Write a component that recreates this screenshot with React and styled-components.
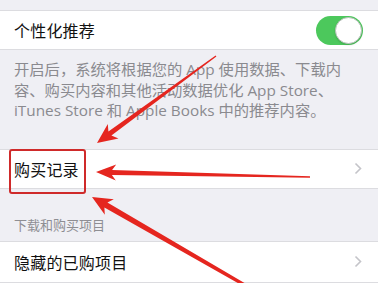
import React from "react";
import styled, { createGlobalStyle } from "styled-components";

const Global = createGlobalStyle`
  html, body { margin: 0; padding: 0; background: #efeff4; }
  body { font-family: "Noto Sans CJK SC", "Noto Sans", sans-serif; }
`;

const Page = styled.div`
  position: relative;
  width: 378px;
  height: 283px;
  overflow: hidden;
  background: #efeff4;
  padding-top: 10px;
  box-sizing: border-box;
`;

const Row = styled.div`
  display: flex;
  align-items: center;
  justify-content: space-between;
  height: ${(p) => p.h || 40}px;
  box-sizing: border-box;
  background: #fff;
  border-top: 1px solid #dcdce0;
  border-bottom: 1px solid #dcdce0;
  padding: 0 16px 0 14px;
  margin-top: ${(p) => p.mt || 0}px;
`;

const Title = styled.span`
  font-size: 16px;
  color: #111;
  letter-spacing: 0.2px;
`;

const Toggle = styled.div`
  width: 47px;
  height: 29px;
  border-radius: 15px;
  background: #4cc85c;
  position: relative;
  margin-right: -1px;
  &::after {
    content: "";
    position: absolute;
    right: 1px;
    top: 1px;
    width: 27px;
    height: 27px;
    box-sizing: border-box;
    border-radius: 50%;
    background: #fff;
    border: 1px solid #b9c2bb;
    box-shadow: 0 1px 2px rgba(0, 0, 0, 0.15);
  }
`;

const Note = styled.p`
  margin: 0;
  padding: 9px 10px 0 14px;
  font-family: "Open Sans", "Noto Sans CJK SC", sans-serif;
  font-size: 15.3px;
  line-height: 20.5px;
  color: #8a8a8f;
  white-space: nowrap;
`;

const Header = styled.div`
  height: 52px;
  display: flex;
  align-items: flex-end;
  padding: 0 14px 7px;
  box-sizing: border-box;
  font-size: 13px;
  color: #8e8e93;
`;

const Overlay = styled.svg`
  position: absolute;
  left: 0;
  top: 0;
  pointer-events: none;
`;

const Chevron = () => (
  <svg width="8" height="13" viewBox="0 0 8 13">
    <polyline points="1.5,1.5 6.5,6.5 1.5,11.5" fill="none" stroke="#c4c4c9" strokeWidth="1.6" />
  </svg>
);

function arrowPoints(tip, tail, headLen, headHalf, shaftW, tailW) {
  const dx = tail[0] - tip[0];
  const dy = tail[1] - tip[1];
  const len = Math.hypot(dx, dy);
  const ux = dx / len, uy = dy / len;
  const nx = -uy, ny = ux;
  const b = [tip[0] + ux * headLen, tip[1] + uy * headLen];
  const bn = [tip[0] + ux * (headLen - 4), tip[1] + uy * (headLen - 4)];
  const pts = [
    tip,
    [b[0] + nx * headHalf, b[1] + ny * headHalf],
    [bn[0] + nx * shaftW / 2, bn[1] + ny * shaftW / 2],
    [tail[0] + nx * tailW / 2, tail[1] + ny * tailW / 2],
    [tail[0] - nx * tailW / 2, tail[1] - ny * tailW / 2],
    [bn[0] - nx * shaftW / 2, bn[1] - ny * shaftW / 2],
    [b[0] - nx * headHalf, b[1] - ny * headHalf],
  ];
  return pts.map((p) => p.map((v) => v.toFixed(1)).join(",")).join(" ");
}

const arrows = [
  { tip: [97, 143], tail: [216, 56], hl: 20, hh: 9, sw: 5, tw: 1.5 },
  { tip: [96, 172], tail: [310, 177], hl: 20, hh: 8, sw: 5, tw: 1.5 },
  { tip: [92, 197], tail: [262, 295], hl: 20, hh: 9, sw: 6, tw: 3 },
];

const noteLines = [
  "开启后，系统将根据您的 App 使用数据、下载内",
  "容、购买内容和其他活动数据优化 App Store、",
  "iTunes Store 和 Apple Books 中的推荐内容。",
];

export default function App() {
  return (
    <>
      <Global />
      <Page>
        <Row>
          <Title>个性化推荐</Title>
          <Toggle />
        </Row>
        <Note>
          {noteLines.map((l, i) => (
            <React.Fragment key={i}>
              {l}
              {i < noteLines.length - 1 && <br />}
            </React.Fragment>
          ))}
        </Note>
        <Row mt={28}>
          <Title>购买记录</Title>
          <Chevron />
        </Row>
        <Header>下载和购买项目</Header>
        <Row h={42}>
          <Title>隐藏的已购项目</Title>
          <Chevron />
        </Row>
        <Overlay width="378" height="283" viewBox="0 0 378 283">
          <rect x="10" y="150" width="75" height="43" rx="2" fill="none" stroke="#cf2a2a" strokeWidth="2" />
          {arrows.map((a, i) => (
            <polygon key={i} points={arrowPoints(a.tip, a.tail, a.hl, a.hh, a.sw, a.tw)} fill="#e5261f" />
          ))}
        </Overlay>
      </Page>
    </>
  );
}
